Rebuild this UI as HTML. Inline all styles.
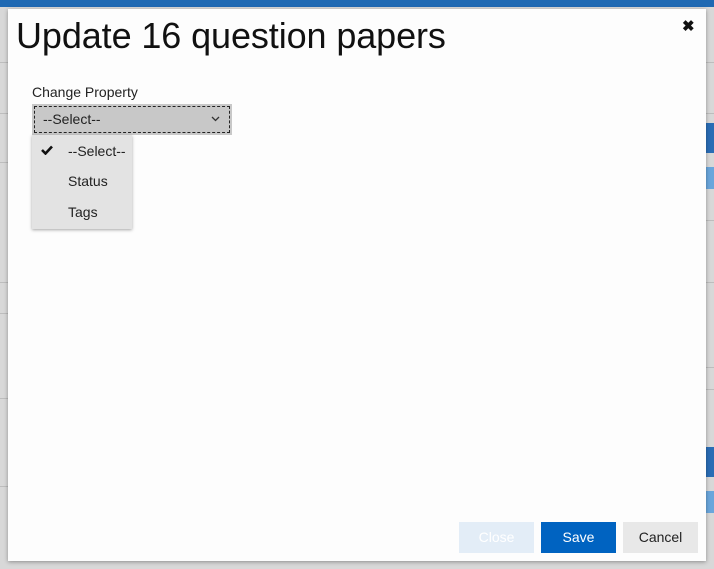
<!DOCTYPE html>
<html><head><meta charset="utf-8"><style>
*{box-sizing:border-box;margin:0;padding:0}
body{width:714px;height:569px;overflow:hidden;background:#d8d8d8;font-family:"Liberation Sans",Roboto,sans-serif;position:relative}
.topbar{position:absolute;left:0;top:0;width:714px;height:7px;background:#1f69b3}
.ln{position:absolute;height:1px;background:#bdbdbd}
.blk{position:absolute;background:#2a6db5}
.lb{position:absolute;background:#6aa6dc}
.dlg{position:absolute;left:8px;top:9px;width:698px;height:552px;background:#fdfdfd;box-shadow:0 1px 4px rgba(0,0,0,.35)}
h1{position:absolute;left:8px;top:6px;font-size:36px;font-weight:400;color:#111;letter-spacing:-0.1px}
.x{position:absolute;left:674px;top:8px;font-size:15px;font-weight:bold;color:#111}
.lab{position:absolute;left:24px;top:75px;font-size:14px;color:#222}
.sel{position:absolute;left:24px;top:95px;width:200px;height:31px;background:#c8c8c8;padding:2px}
.sel div{width:100%;height:100%;border:1px dashed #222;font-size:14px;color:#222;padding:4px 0 0 8px;position:relative}
.menu{position:absolute;left:24px;top:126px;width:100px;height:94px;background:#e3e3e3;box-shadow:0 1px 3px rgba(0,0,0,.35);font-size:14px;color:#222}
.menu div{position:absolute;left:36px}
.btn{position:absolute;top:513px;width:75px;height:31px;font-size:14px;text-align:center;line-height:31px}
</style></head><body>
<div class="topbar"></div>
<div class="ln" style="left:0;top:62px;width:8px"></div>
<div class="ln" style="left:0;top:113px;width:8px"></div>
<div class="ln" style="left:0;top:162px;width:8px"></div>
<div class="ln" style="left:0;top:282px;width:8px"></div>
<div class="ln" style="left:0;top:313px;width:8px"></div>
<div class="ln" style="left:0;top:398px;width:8px"></div>
<div class="ln" style="left:0;top:486px;width:8px"></div>
<div class="ln" style="left:706px;top:62px;width:8px"></div>
<div class="ln" style="left:706px;top:113px;width:8px"></div>
<div class="ln" style="left:706px;top:220px;width:8px"></div>
<div class="ln" style="left:706px;top:282px;width:8px"></div>
<div class="ln" style="left:706px;top:367px;width:8px"></div>
<div class="ln" style="left:706px;top:389px;width:8px"></div>
<div class="blk" style="left:706px;top:123px;width:8px;height:30px"></div>
<div class="lb" style="left:706px;top:167px;width:8px;height:22px"></div>
<div class="blk" style="left:706px;top:447px;width:8px;height:30px"></div>
<div class="lb" style="left:706px;top:491px;width:8px;height:22px"></div>
<div class="dlg">
<h1>Update 16 question papers</h1>
<div class="x">✖</div>
<div class="lab">Change Property</div>
<div class="sel"><div>--Select--<svg style="position:absolute;right:9px;top:9px" width="9" height="6" viewBox="0 0 9 6"><path d="M1 1l3.5 3.5L8 1" fill="none" stroke="#333" stroke-width="1.3"/></svg></div></div>
<div class="menu">
<svg style="position:absolute;left:9px;top:10px" width="12" height="10" viewBox="0 0 12 10"><path d="M1 5l3.5 3.5L11 1.5" fill="none" stroke="#111" stroke-width="2.6"/></svg>
<div style="top:8px">--Select--</div>
<div style="top:38px">Status</div>
<div style="top:69px">Tags</div>
</div>
<div class="btn" style="left:451px;background:#e3edf7;color:#fff">Close</div>
<div class="btn" style="left:533px;background:#0063c1;color:#fff">Save</div>
<div class="btn" style="left:615px;background:#e8e8e8;color:#222">Cancel</div>
</div>
</body></html>
